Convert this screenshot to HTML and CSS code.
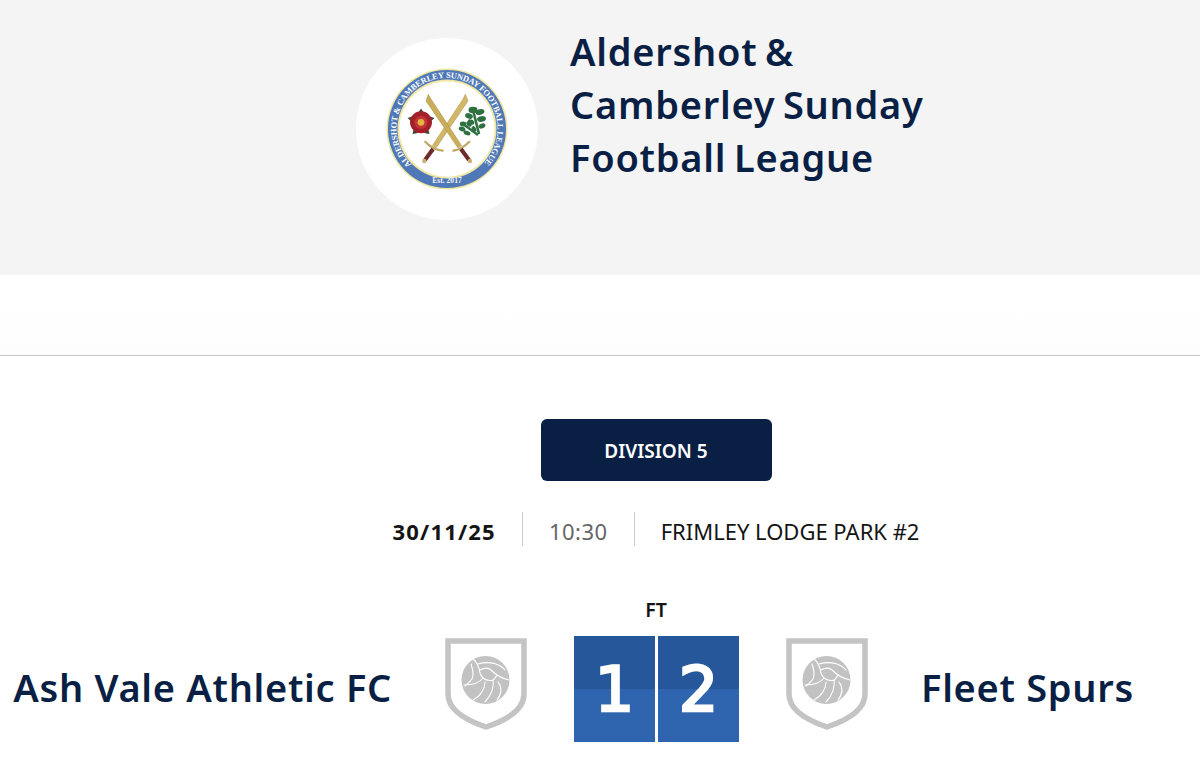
FILE: index.html
```html
<!DOCTYPE html>
<html lang="en">
<head>
<meta charset="utf-8">
<title>Ash Vale Athletic FC v Fleet Spurs</title>
<link rel="stylesheet" href="styles.css">
</head>
<body>
<header class="league-header">
  <div class="league-logo">
    <svg class="logo-svg" viewBox="0 0 130 130" width="130" height="130">
      <defs>
        <path id="ring-top" d="M 29.6 100.4 A 50.5 50.5 0 1 1 100.4 100.4"/>
      </defs>
      <circle cx="65" cy="65" r="60.5" fill="#efe6a0"/>
      <circle cx="65" cy="65" r="59" fill="#4f78b8"/>
      <circle cx="65" cy="65" r="49.5" fill="#f1e8a6"/>
      <circle cx="65" cy="65" r="47.5" fill="#fff"/>
      <text class="ring-text"><textPath href="#ring-top" textLength="236" lengthAdjust="spacing">ALDERSHOT &amp; CAMBERLEY SUNDAY FOOTBALL LEAGUE</textPath></text>
      <text class="ring-text est" x="65" y="118.5" text-anchor="middle">Est. 2017</text>

      <path d="M 83.3 30.3 L 86 37 L 54 84 L 50.5 81.5 L 81 35 Z" fill="#d2b768" stroke="#a98f47" stroke-width=".5"/>
      <path d="M 43.3 77.7 C 48 83 54 86 60.7 86.7" fill="none" stroke="#bfa765" stroke-width="2.2" stroke-linecap="round"/>
      <path d="M 51 85 L 43 96" stroke="#6e2a2a" stroke-width="4"/>
      <circle cx="42.3" cy="97" r="2.2" fill="#c9b272"/>

      <path d="M 46.3 30.3 L 49 35 L 79.5 81.5 L 76 84 L 44 37 Z" fill="#c9ad5a" stroke="#a98f47" stroke-width=".5"/>
      <path d="M 87.3 77.7 C 82 83 76 86 71.3 86.7" fill="none" stroke="#bfa765" stroke-width="2.2" stroke-linecap="round"/>
      <path d="M 79 85 L 87 96" stroke="#6e2a2a" stroke-width="4"/>
      <circle cx="88" cy="97" r="2.2" fill="#c9b272"/>

      <g fill="#3a4534">
        <path d="M 39 44.5 L 42 49 H 36 Z"/>
        <path d="M 52.5 54 L 48 58 L 46 52 Z"/>
        <path d="M 47.5 70 L 42 69 L 46 64 Z"/>
        <path d="M 30.5 70 L 36 69 L 32 64 Z"/>
        <path d="M 25.5 54 L 30 58 L 32 52 Z"/>
      </g>
      <circle cx="39" cy="58.3" r="11" fill="#a32029"/>
      <circle cx="39" cy="58.3" r="6.5" fill="#c4323a"/>
      <circle cx="39" cy="58.3" r="3.4" fill="#e3b53f"/>

      <g fill="#2f7040">
        <g class="oak-upper">
          <path d="M 97 70 L 91 46" stroke="#2f7040" stroke-width="2.6"/>
          <ellipse cx="91" cy="46" rx="4.5" ry="3.2"/>
          <ellipse cx="98" cy="48" rx="4.5" ry="2.8" transform="rotate(-15 98 48)"/>
          <ellipse cx="87" cy="52" rx="4" ry="2.6" transform="rotate(20 87 52)"/>
          <ellipse cx="99.5" cy="55" rx="4.5" ry="2.8" transform="rotate(-10 99.5 55)"/>
          <ellipse cx="89" cy="58" rx="3.5" ry="2.4" transform="rotate(25 89 58)"/>
          <ellipse cx="100" cy="62" rx="3.5" ry="2.4" transform="rotate(-20 100 62)"/>
        </g>
        <g class="oak-lower">
          <path d="M 96 71 L 81 60" stroke="#2f7040" stroke-width="2.4"/>
          <ellipse cx="81" cy="60" rx="3.2" ry="2.4"/>
          <ellipse cx="80" cy="65" rx="3.4" ry="2.2" transform="rotate(15 80 65)"/>
          <ellipse cx="87" cy="60" rx="3" ry="2.2" transform="rotate(50 87 60)"/>
          <ellipse cx="85" cy="69" rx="3.6" ry="2.2" transform="rotate(20 85 69)"/>
          <ellipse cx="92" cy="65" rx="3" ry="2" transform="rotate(60 92 65)"/>
        </g>
      </g>
    </svg>
  </div>
  <h1 class="league-title">Aldershot &amp;<br>Camberley Sunday<br>Football League</h1>
</header>
<nav class="nav-strip" aria-label="League"></nav>
<main class="match">
  <div class="fixture-head">
    <div class="division">DIVISION 5</div>
    <ul class="meta">
      <li class="meta-date">30/11/25</li>
      <li class="meta-time">10:30</li>
      <li class="meta-venue">FRIMLEY LODGE PARK #2</li>
    </ul>
    <div class="status">FT</div>
  </div>
  <div class="scoreline">
    <div class="side side-home">
      <span class="team-name">Ash Vale Athletic FC</span>
      <svg class="crest" viewBox="0 0 82 92" width="82" height="92"><use href="#crest-art"/></svg>
    </div>
    <div class="score">
      <span class="score-cell">1</span>
      <span class="score-cell">2</span>
    </div>
    <div class="side side-away">
      <svg class="crest" viewBox="0 0 82 92" width="82" height="92">
        <g id="crest-art">
          <path d="M 3 3 H 79 V 56 C 79 72 62 82 41 89 C 20 82 3 72 3 56 Z" fill="#fff" stroke="#c4c4c4" stroke-width="5.5"/>
          <circle cx="40.5" cy="42" r="24" fill="#c2c2c2"/>
          <g fill="none" stroke="#fff" stroke-width="1.1" stroke-linecap="round">
            <path d="M 28 21 C 32 24 34 29 35 35 C 36 38 37 39 38 40"/>
            <path d="M 33 26 C 40 24 52 23 60 32"/>
            <path d="M 35 32 C 39 30 43 29 46 32 C 49 35 54 40 64 42"/>
            <path d="M 38 40 C 42 43 45 43 48 42 C 50 41 51 39 52 37"/>
            <path d="M 38 40 C 35 44 28 47 19 47"/>
            <path d="M 26 26 C 28 32 29 37 27 41 C 25 44 22 46 20 48"/>
            <path d="M 48 42 C 49 48 47 57 40 64"/>
            <path d="M 40 44 C 40 50 36 58 28 62"/>
            <path d="M 53 44 C 57 49 57 56 52 62"/>
          </g>
        </g>
      </svg>
      <span class="team-name">Fleet Spurs</span>
    </div>
  </div>
</main>
</body>
</html>
```
FILE: styles.css
```css
* { box-sizing: border-box; }
html, body { margin: 0; padding: 0; }
body {
  width: 1200px;
  height: 770px;
  overflow: hidden;
  background: #fff;
  font-family: "Noto Sans", "Open Sans", sans-serif;
  color: #0a1f44;
}
.league-header {
  height: 275px;
  background: #f4f4f5;
  display: flex;
  padding: 38px 0 0 356px;
  gap: 32px;
}
.league-logo {
  width: 182px;
  height: 182px;
  border-radius: 50%;
  background: #fff;
  display: flex;
  align-items: center;
  justify-content: center;
  flex: none;
}
.logo-svg { display: block; }
.ring-text {
  font-family: "Liberation Serif", serif;
  font-weight: 700;
  font-size: 8.4px;
  fill: #fff;
}
.ring-text.est { font-size: 7.6px; fill: #f4f4f4; }
.league-title {
  margin: -13px 0 0;
  font-size: 38px;
  line-height: 53px;
  letter-spacing: .75px;
  word-spacing: -3px;
  font-weight: 600;
  color: #0a1f44;
}
.nav-strip {
  height: 81px;
  background: linear-gradient(#fff 40%, #fdfdfd 95%);
  border-bottom: 1.5px solid #c6c6c6;
}
.match { width: 1200px; }
.fixture-head {
  padding-left: 112px;
  display: flex;
  flex-direction: column;
  align-items: center;
}
.division {
  margin-top: 63px;
  width: 231px;
  height: 62px;
  padding-top: 2px;
  border-radius: 6px;
  background: #0a1f44;
  color: #fff;
  font-size: 19px;
  font-weight: 600;
  display: flex;
  align-items: center;
  justify-content: center;
}
.meta {
  list-style: none;
  margin: 31px 0 0;
  padding: 0;
  display: flex;
  font-size: 22px;
  line-height: 34px;
  color: #141414;
}
.meta li { padding: 2px 26px 0; height: 34px; line-height: 34px; }
.meta li + li { border-left: 1.5px solid #c9c9c9; }
.meta-date { font-weight: 700; letter-spacing: 1.2px; }
.meta-time { color: #666; letter-spacing: .5px; }
.meta-venue { padding-left: 25px; }
.status {
  margin-top: 52px;
  font-size: 19.5px;
  line-height: 24px;
  font-weight: 600;
  color: #141414;
}
.scoreline {
  margin-top: 14px;
  display: grid;
  grid-template-columns: 527px auto 1fr;
  column-gap: 47px;
}
.side {
  display: flex;
  align-items: center;
  gap: 53px;
  height: 106px;
}
.side-home { justify-content: flex-end; }
.crest { display: block; flex: none; margin-top: -10px; }
.team-name {
  margin-top: -4px;
  font-size: 38px;
  letter-spacing: .7px;
  font-weight: 600;
  color: #0a1f44;
  white-space: nowrap;
}
.score {
  display: flex;
  gap: 3px;
}
.score-cell {
  width: 81px;
  height: 106px;
  background: linear-gradient(#26579a 50%, #2e65ae 50%);
  color: #fff;
  font-family: "DejaVu Sans", sans-serif;
  font-size: 62px;
  font-weight: 400;
  -webkit-text-stroke: 2.6px #fff;
  display: flex;
  align-items: center;
  justify-content: center;
}
```
